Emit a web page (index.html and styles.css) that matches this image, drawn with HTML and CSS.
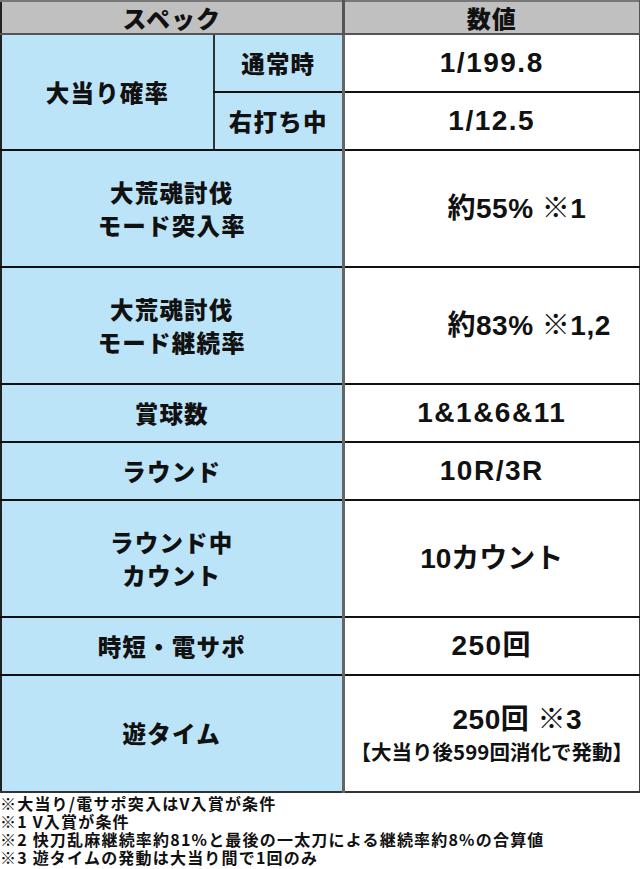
FILE: index.html
```html
<!DOCTYPE html>
<html lang="ja">
<head>
<meta charset="utf-8">
<link rel="stylesheet" href="styles.css">
</head>
<body>
<table class="spec">
  <colgroup><col class="c1"><col class="c2"><col class="c3"></colgroup>
  <tr class="head"><th colspan="2">スペック</th><th class="hv">数値</th></tr>
  <tr class="short"><th rowspan="2" class="lbl">大当り確率</th><th class="lbl sub">通常時</th><td class="val">1/199.8</td></tr>
  <tr class="short"><th class="lbl sub">右打ち中</th><td class="val">1/12.5</td></tr>
  <tr class="tall"><th colspan="2" class="lbl two">大荒魂討伐<br>モード突入率</th><td class="val off">約55% ※1</td></tr>
  <tr class="tall"><th colspan="2" class="lbl two">大荒魂討伐<br>モード継続率</th><td class="val off">約83% ※1,2</td></tr>
  <tr class="short"><th colspan="2" class="lbl">賞球数</th><td class="val">1&amp;1&amp;6&amp;11</td></tr>
  <tr class="short"><th colspan="2" class="lbl">ラウンド</th><td class="val">10R/3R</td></tr>
  <tr class="tall"><th colspan="2" class="lbl two">ラウンド中<br>カウント</th><td class="val kana">10カウント</td></tr>
  <tr class="short"><th colspan="2" class="lbl">時短・電サポ</th><td class="val">250回</td></tr>
  <tr class="tall"><th colspan="2" class="lbl">遊タイム</th><td class="val"><div class="yu">250回 ※3</div><div class="small">【大当り後599回消化で発動】</div></td></tr>
</table>
<div class="notes">
  <p>※大当り/電サポ突入はV入賞が条件</p>
  <p>※1 V入賞が条件</p>
  <p>※2 快刀乱麻継続率約81%と最後の一太刀による継続率約8%の合算値</p>
  <p>※3 遊タイムの発動は大当り間で1回のみ</p>
</div>
</body>
</html>
```

FILE: styles.css
```css
html, body {
  margin: 0;
  padding: 0;
  background: #ffffff;
}
body {
  width: 640px;
  font-family: "Liberation Sans", "Noto Sans CJK JP", sans-serif;
  font-weight: 700;
  color: #111;
}
.spec {
  border-collapse: collapse;
  width: 639px;
  table-layout: fixed;
  margin: 0;
}
.c1 { width: 213px; }
.c2 { width: 129px; }
.c3 { width: 297px; }
.spec th, .spec td {
  padding: 0;
  text-align: center;
  vertical-align: middle;
  border-top: 2px solid #111;
  border-bottom: 2px solid #111;
}
.spec tr:first-child th { border-top: 2px solid #777; }
.spec tr:last-child th, .spec tr:last-child td { border-bottom: 2px solid #333; }
.head th {
  background: #c0c0c0;
  height: 31px;
  font-family: "Noto Sans CJK JP", sans-serif;
  font-weight: 900;
  font-size: 24px;
  letter-spacing: 1px;
  line-height: 28px;
  border-bottom: 2px solid #555;
  border-left: 2px solid #222;
}
.head .hv { border-left: 3px solid #555; border-right: 2px solid #555; }
.lbl {
  background: #bce4f8;
  font-family: "Noto Sans CJK JP", sans-serif;
  font-weight: 900;
  font-size: 23.5px;
  letter-spacing: 1.2px;
  line-height: 33px;
  border-left: 2px solid #222;
}
.sub { border-left: 2px solid #333; }
.short { height: 58px; }
.tall { height: 117px; }
.val {
  background: #fff;
  font-size: 28px;
  letter-spacing: 1.5px;
  border-left: 3px solid #666;
  border-right: 2px solid #444;
  line-height: 32px;
}
.spec td.kana { letter-spacing: 0; }
.spec td.off { text-align: left; padding-left: 103px; letter-spacing: 0.5px; }
.yu { text-align: left; padding-left: 108px; letter-spacing: 0.5px; }
.small {
  font-family: "Noto Sans CJK JP", sans-serif;
  font-size: 20.5px;
  letter-spacing: 0;
  line-height: 26px;
  margin-top: 2px;
}
.notes {
  padding-top: 1px;
  font-family: "Noto Sans CJK JP", sans-serif;
  font-weight: 700;
  font-size: 16px;
  letter-spacing: 1.2px;
  line-height: 18px;
}
.notes p { margin: 0; height: 18px; }
```
